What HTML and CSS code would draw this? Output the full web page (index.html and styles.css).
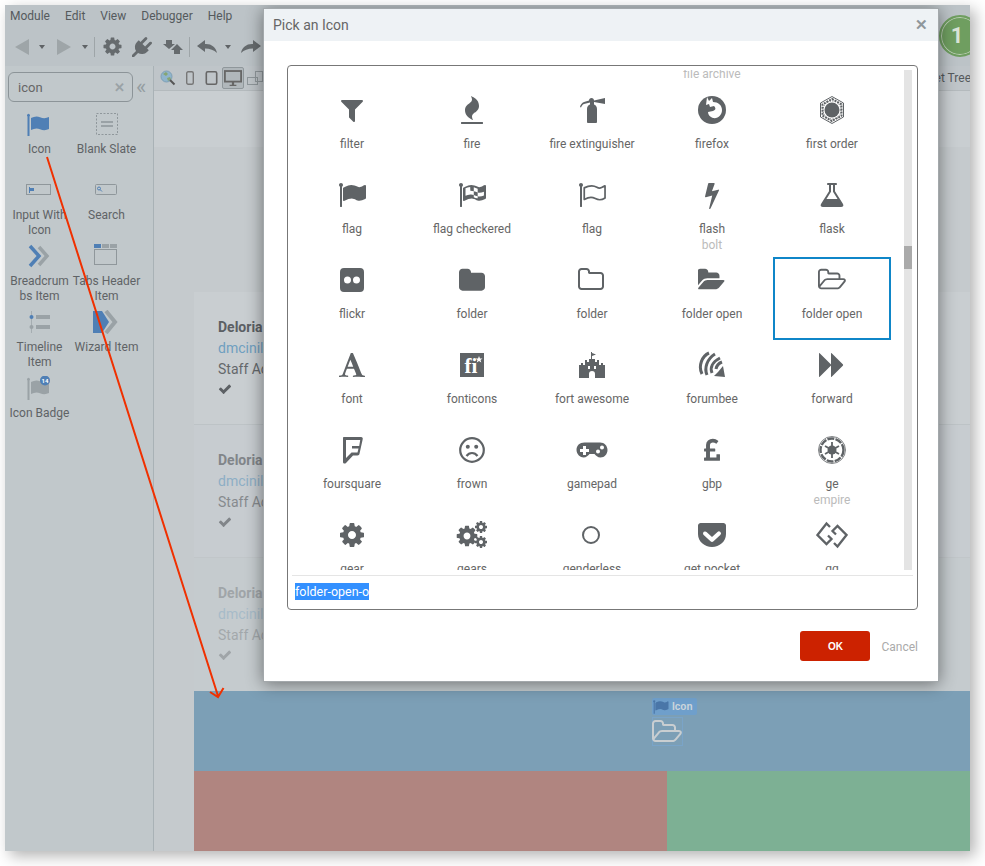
FILE: index.html
```html
<!DOCTYPE html>
<html lang="en">
<head>
  <meta charset="UTF-8">
  <title>Pick an Icon</title>
  <link rel="stylesheet" href="styles.css">
</head>
<body>
  <!-- icon sprite -->
  <svg class="sprite" xmlns="http://www.w3.org/2000/svg">
    <symbol id="i-filter" viewBox="0 0 1792 1792"><path d="M1595 295q17 41-14 70l-493 493v742q0 42-39 59-13 5-25 5-27 0-45-19l-256-256q-19-19-19-45v-486l-493-493q-31-29-14-70 17-39 59-39h1280q42 0 59 39z"/></symbol>
    <symbol id="i-fire" viewBox="0 0 1792 1792"><path d="M1600 1696v64q0 13-9.5 22.5t-22.5 9.5h-1344q-13 0-22.5-9.5t-9.5-22.5v-64q0-13 9.5-22.5t22.5-9.5h1344q13 0 22.5 9.5t9.5 22.5zm-256-1056q0 78-24.5 144t-64 112.5-87.5 88-96 77.5-87.5 72-64 81.5-24.5 96.5q0 96 67 224l-4-1 1 1q-90-41-160-83t-138.5-100-113.5-122.5-72.5-150.5-27.5-184q0-78 24.5-144t64-112.5 87.5-88 96-77.5 87.5-72 64-81.5 24.5-96.5q0-94-66-224l3 1-1-1q90 41 160 83t138.5 100 113.5 122.5 72.5 150.5 27.5 184z"/></symbol>
    <symbol id="i-extinguisher" viewBox="0 0 28 28"><path d="M9 26V13c0-2.500 1.500-4 3-4.500V6.500L6 8c-1.500.5-2.500 2-3 3.500L2 11c.5-2.500 2-4 4-5l5-1.500C11 3 12 2 13.500 2S16 3 16 4.500L27 2v6l-11-2v2.500c1.500.5 3 2 3 4.500v13c0 .5-.5 1-1 1h-8c-.5 0-1-.5-1-1z"/></symbol>
    <symbol id="i-firefox" viewBox="0 0 28 28"><circle cx="14" cy="14" r="14"/><path fill="#fff" d="M9 1l2 4 3-3 1 4c5 0 9 3 9 8 0 5-4 9-9 8-3-1-5-3-5-6l5-1c3-1 3-3 1-5l-4 1-1-3-3 1z"/></symbol>
    <symbol id="i-first-order" viewBox="0 0 28 28"><polygon points="14,.5 25.500,7 25.500,21 14,27.500 2.500,21 2.500,7" fill="none" stroke="currentColor"/><polygon points="14,3 23.500,8.300 23.500,19.700 14,25 4.500,19.700 4.500,8.300" fill="none" stroke="currentColor" stroke-width="2" stroke-dasharray="2 1"/><circle cx="14" cy="14" r="7.500"/><circle cx="14" cy="14" r="9" fill="none" stroke="currentColor" stroke-dasharray="1 1.500"/></symbol>
    <symbol id="i-flag" viewBox="0 0 1792 1792"><path d="M320 256q0 72-64 110v1266q0 13-9.500 22.500t-22.500 9.500h-64q-13 0-22.500-9.500t-9.500-22.500v-1266q-64-38-64-110 0-53 37.500-90.500t90.500-37.500 90.500 37.500 37.500 90.500zm1472 64v763q0 25-12.500 38.500t-39.500 27.500q-215 116-369 116-61 0-123.500-22t-108.500-48-115.500-48-142.500-22q-192 0-464 146-17 9-33 9-26 0-45-19t-19-45v-742q0-32 31-55 21-14 79-43 236-120 421-120 107 0 200 29t219 88q38 19 88 19 54 0 117.500-21t110-47 88-47 54.500-21q26 0 45 19t19 45z"/></symbol>
    <symbol id="i-flag-checkered" viewBox="0 0 1792 1792"><path d="M320 256q0 72-64 110v1266q0 13-9.500 22.500t-22.500 9.500h-64q-13 0-22.500-9.500t-9.500-22.500v-1266q-64-38-64-110 0-53 37.500-90.500t90.500-37.500 90.500 37.500 37.500 90.500zm1472 64v763q0 25-12.500 38.500t-39.500 27.500q-215 116-369 116-61 0-123.500-22t-108.500-48-115.500-48-142.500-22q-192 0-464 146-17 9-33 9-26 0-45-19t-19-45v-742q0-32 31-55 21-14 79-43 236-120 421-120 107 0 200 29t219 88q38 19 88 19 54 0 117.500-21t110-47 88-47 54.500-21q26 0 45 19t19 45z"/><path fill="#fff" d="M480 470q120-70 300-90l10 250q-160 10-310 90zM1010 400q130 40 250 100v240q-120-60-250-90zM790 630q120 0 220 20v240q-100-40-220-30zM1260 740q180 40 400-60v240q-200 100-400 60zM480 720q120-60 310-90v230q-170 20-310 90zM1010 890q120 40 250 90v130q-130 10-250-70z"/></symbol>
    <symbol id="i-flag-o" viewBox="0 0 1792 1792"><path d="M320 256q0 72-64 110v1266q0 13-9.500 22.500t-22.500 9.500h-64q-13 0-22.500-9.500t-9.500-22.500v-1266q-64-38-64-110 0-53 37.500-90.500t90.500-37.500 90.500 37.500 37.500 90.500z"/><path fill="none" stroke="currentColor" stroke-width="110" stroke-linejoin="round" d="M400 440q240-130 480-130 170 0 330 90 150 90 300 20 120-50 220-110v780q-170 110-340 110-130 0-280-80-150-70-280-70-180 0-430 130z"/></symbol>
    <symbol id="i-bolt" viewBox="0 0 1792 1792"><path d="M1333 566q18 20 7 44l-540 1157q-13 25-42 25-4 0-14-2-17-5-25.500-19t-4.500-30l197-808-406 101q-4 1-12 1-18 0-31-11-18-15-13-39l201-825q4-14 16-23t28-9h328q19 0 32 12.500t13 29.500q0 8-5 18l-171 463 396-98q8-2 12-2 19 0 34 15z"/></symbol>
    <symbol id="i-flask" viewBox="0 0 1792 1792"><path d="M1591 1448q56 89 21.500 152.500t-140.500 63.500h-1152q-106 0-140.500-63.500t21.500-152.500l503-793v-399h-64q-26 0-45-19t-19-45 19-45 45-19h512q26 0 45 19t19 45-19 45-45 19h-64v399zm-779-725l-272 429h712l-272-429-20-31v-436h-128v436z"/></symbol>
    <symbol id="i-flickr" viewBox="0 0 28 28"><path fill-rule="evenodd" d="M6 2h16a4 4 0 0 1 4 4v16a4 4 0 0 1-4 4H6a4 4 0 0 1-4-4V6a4 4 0 0 1 4-4zM9.500 10.500a3.500 3.500 0 1 0 0 7a3.500 3.500 0 0 0 0-7zM18.500 10.500a3.500 3.500 0 1 0 0 7a3.500 3.500 0 0 0 0-7z"/></symbol>
    <symbol id="i-folder" viewBox="0 0 1792 1792"><path d="M1600 648v704q0 92-66 158t-158 66h-1216q-92 0-158-66t-66-158v-960q0-92 66-158t158-66h320q92 0 158 66t66 158v32h672q92 0 158 66t66 158z" transform="translate(128 0)"/></symbol>
    <symbol id="i-folder-o" viewBox="0 0 1792 1792"><path d="M1536 1312v-704q0-40-28-68t-68-28h-704q-40 0-68-28t-28-68v-64q0-40-28-68t-68-28h-320q-40 0-68 28t-28 68v960q0 40 28 68t68 28h1216q40 0 68-28t28-68zm128-704v704q0 92-66 158t-158 66h-1216q-92 0-158-66t-66-158v-960q0-92 66-158t158-66h320q92 0 158 66t66 158v32h672q92 0 158 66t66 158z"/></symbol>
    <symbol id="i-folder-open" viewBox="0 0 1920 1792"><path d="M1815 952q0 31-31 66l-336 396q-43 51-120.500 86.500t-143.500 35.500h-1088q-34 0-60.500-13t-26.500-43q0-31 31-66l336-396q43-51 120.500-86.500t143.500-35.500h1088q34 0 60.500 13t26.500 43zm-343-344v160h-832q-94 0-197 47.500t-164 119.500l-337 396-5 6q0-4-.5-12.500t-.5-12.500v-960q0-92 66-158t158-66h320q92 0 158 66t66 158v32h544q92 0 158 66t66 158z"/></symbol>
    <symbol id="i-folder-open-o" viewBox="0 0 1920 1792"><path d="M1781 931q0-35-53-35h-1088q-40 0-85.500 21.500t-71.500 52.500l-294 363q-18 24-18 40 0 35 53 35h1088q40 0 86-22t71-53l294-363q18-22 18-39zm-1141-163h768v-160q0-40-28-68t-68-28h-576q-40 0-68-28t-28-68v-64q0-40-28-68t-68-28h-320q-40 0-68 28t-28 68v853l256-315q44-53 116-87.500t140-34.500zm1269 163q0 62-46 120l-295 363q-43 53-116 87.500t-140 34.500h-1088q-92 0-158-66t-66-158v-960q0-92 66-158t158-66h320q92 0 158 66t66 158v32h544q92 0 158 66t66 158v160h192q54 0 99 24.500t67 70.500q15 32 15 68z"/></symbol>
    <symbol id="i-font" viewBox="0 0 1792 1792"><path d="M789 559l-170 450q33 0 136.500 2t160.500 2q19 0 57-2-87-253-184-452zm-725 1105l2-79q23-7 56-12.500t57-10.500 49.500-14.500 44.500-29 31-50.500l237-616 280-724h128q8 14 11 21l205 480q33 78 106 257.500t114 274.500q15 34 58 144.500t72 168.500q20 45 35 57 19 15 88 29.500t84 20.500q6 38 6 57 0 4-.5 13t-.5 13q-63 0-190-8t-191-8q-76 0-215 7t-178 8q0-43 4-78l131-28q1 0 12.500-2.500t15.500-3.500 14.500-4.500 15-6.500 11-8 9-11 2.500-14q0-16-31-96.500t-72-177.500-42-100l-450-2q-26 58-76.500 195.500t-50.500 162.500q0 22 14 37.500t43.500 24.500 48.500 13.500 57 8.500 41 4q1 19 1 58 0 9-2 27-58 0-174.500-10t-174.500-10q-8 0-26.500 4t-21.500 4q-80 14-188 14z"/></symbol>
    <symbol id="i-fort" viewBox="0 0 28 28"><path fill-rule="evenodd" d="M13 1h1v1l4 1.500L14 5v3h3v3h2V9h2v5h2v-2h2v2h2v13H17v-4a3 3 0 0 0-6 0v4H1V14h2v-2h2v2h2V9h2v2h2V8h2zM10 15v3h2v-3zM16 15v3h2v-3z"/></symbol>
    <symbol id="i-forumbee" viewBox="0 0 28 28"><g fill="none" stroke="currentColor" stroke-width="3"><path d="M4 23C0 15 4 5 11 2"/><path d="M9 24C6 17 9 8 17 3"/><path d="M14 22C12 17 14 11 22 7"/><path d="M18 18c.5-3 2-5.500 6-7"/></g><polygon points="25,15 27,26 16,25 20,21"/></symbol>
    <symbol id="i-forward" viewBox="0 0 1792 1792"><path d="M109 1651q-19 19-32 13t-13-32v-1472q0-26 13-32t32 13l710 710q9 9 13 19v-710q0-26 13-32t32 13l710 710q19 19 19 45t-19 45l-710 710q-19 19-32 13t-13-32v-710q-4 10-13 19z"/></symbol>
    <symbol id="i-foursquare" viewBox="0 0 28 28"><path fill-rule="evenodd" d="M6 1h17c1.500 0 2 1 1.700 2.200l-3.200 14.600c-.2 1-.9 1.700-2 1.700h-4.500L8 27c-1 1-3 .6-3-1V2c0-.6.400-1 1-1zM8 4v18l5.500-5.500h6l1-4H14v-2.500h7.200l1-6z"/></symbol>
    <symbol id="i-frown" viewBox="0 0 28 28"><circle cx="14" cy="14" r="11.800" fill="none" stroke="currentColor" stroke-width="2.200"/><circle cx="9.800" cy="10.800" r="2"/><circle cx="18.200" cy="10.800" r="2"/><path d="M8.500 20c2.800-4 8.200-4 11 0" fill="none" stroke="currentColor" stroke-width="2.200"/></symbol>
    <symbol id="i-gamepad" viewBox="0 0 32 28"><path fill-rule="evenodd" d="M8 6.500h16c4.500 0 7.500 3.500 7.500 7.500s-3 7.500-7 7.500c-3 0-4.500-2-6-3.500h-5c-1.500 1.500-3 3.500-6 3.500s-7-3-7-7.500 3-7.500 8-7.500zM7 10v3H4v3h3v3h3v-3h3v-3h-3v-3zM22 13.500a2 2 0 1 0 0 4a2 2 0 0 0 0-4zM26 9.500a2 2 0 1 0 0 4a2 2 0 0 0 0-4z"/></symbol>
    <symbol id="i-gbp" viewBox="0 0 1024 1792"><path d="M1022 1192v367q0 14-9 23t-23 9h-956q-14 0-23-9t-9-23v-150q0-13 9.500-22.500t22.500-9.500h97v-383h-95q-14 0-23-9.500t-9-22.500v-131q0-14 9-23t23-9h95v-223q0-171 123.500-282t314.500-111q185 0 335 125 9 8 10 20.500t-7 22.500l-103 127q-9 11-22 12-13 2-23-7-5-5-26-19t-69-32-93-18q-85 0-137 47t-52 123v215h305q13 0 22.500 9t9.500 23v131q0 13-9.500 22.500t-22.500 9.500h-305v379h414v-181q0-13 9-22.500t23-9.500h162q14 0 23 9.500t9 22.500z"/></symbol>
    <symbol id="i-ge" viewBox="0 0 28 28"><circle cx="14" cy="14" r="13.500" fill="none" stroke="currentColor" stroke-width=".8"/><circle cx="14" cy="14" r="11.500" fill="none" stroke="currentColor" stroke-width="2.400" stroke-dasharray="7 1.200"/><circle cx="14" cy="14" r="4.500"/><g stroke="currentColor" stroke-width="1.800"><path d="M14 6v16M7 10l14 8M21 10L7 18"/></g></symbol>
    <symbol id="i-cog" viewBox="0 0 1792 1792"><path d="M1152 896q0-106-75-181t-181-75-181 75-75 181 75 181 181 75 181-75 75-181zm512-109v222q0 12-8 23t-20 13l-185 28q-19 54-39 91 35 50 107 138 10 12 10 25t-9 23q-27 37-99 108t-94 71q-12 0-26-9l-138-108q-44 23-91 38-16 136-29 186-7 28-36 28h-222q-14 0-24.500-8.500t-11.500-21.500l-28-184q-49-16-90-37l-141 107q-10 9-25 9-14 0-25-11-126-114-165-168-7-10-7-23 0-12 8-23 15-21 51-66.500t54-70.500q-27-50-41-99l-183-27q-13-2-21-12.500t-8-23.500v-222q0-12 8-23t19-13l186-28q14-46 39-92-40-57-107-138-10-12-10-24 0-10 9-23 26-36 98.500-107.500t94.500-71.500q13 0 26 10l138 107q44-23 91-38 16-136 29-186 7-28 36-28h222q14 0 24.500 8.500t11.500 21.500l28 184q49 16 90 37l142-107q9-9 24-9 13 0 25 10 129 119 165 170 7 8 7 22 0 12-8 23-15 21-51 66.500t-54 70.500q26 50 41 98l183 28q13 2 21 12.500t8 23.500z"/></symbol>
    <symbol id="i-gears" viewBox="-4 0 32 28"><use href="#i-cog" x="-5" y="3" width="24" height="24"/><use href="#i-cog" x="14" y="-1" width="14" height="14"/><use href="#i-cog" x="14" y="14" width="14" height="14"/></symbol>
    <symbol id="i-pocket" viewBox="0 0 28 28"><path fill-rule="evenodd" d="M2.500 2h23C26.500 2 28 3 28 4.500V13c0 7.500-6.500 13-14 13S0 20.500 0 13V4.500C0 3 1.500 2 2.500 2zM7 10.500a2 2 0 0 0-1.300 3.500l6.800 6.300a2.200 2.200 0 0 0 3 0l6.800-6.300A2 2 0 0 0 19.500 11L14 16l-5.500-5a2 2 0 0 0-1.500-.5z"/></symbol>
    <symbol id="i-gg" viewBox="0 0 32 28"><g fill="none" stroke="currentColor" stroke-width="2.300"><path d="M14 6l-3.500-3.500L1.500 14l9 9 5-5-3.500-3.500"/><path d="M18 22l3.500 3.500 9-11.500-9-9-5 5 3.500 3.500"/></g></symbol>
    <symbol id="i-check" viewBox="0 0 1792 1792"><path d="M1671 566q0 40-28 68l-724 724-136 136q-28 28-68 28t-68-28l-136-136-362-362q-28-28-28-68t28-68l136-136q28-28 68-28t68 28l294 295 656-657q28-28 68-28t68 28l136 136q28 28 28 68z"/></symbol>
    <symbol id="i-plug" viewBox="0 0 1792 1792"><path d="M1755 453q37 38 37 90.500t-37 90.500l-401 400 150 150-160 160q-163 163-389.500 186.500t-411.500-100.500l-362 362h-181v-181l362-362q-124-185-100.500-411.500t186.500-389.500l160-160 150 150 400-401q38-37 91-37t90 37 37 90.500-37 90.500l-400 401 234 234 401-400q38-37 91-37t90 37z"/></symbol>
    <symbol id="i-undo" viewBox="0 0 20 13"><path d="M0 6L8 0v4c6-.5 11 3 12 9-3-3-7-4.500-12-4.500V12z"/></symbol>
  </svg>

  <div class="app">
    <div class="menu-bar">
      <span>Module</span><span>Edit</span><span>View</span><span>Debugger</span><span>Help</span>
    </div>

    <div class="toolbar">
      <span class="tri tri-left"></span><span class="caret caret-a"></span>
      <span class="tri tri-right"></span><span class="caret caret-b"></span>
      <span class="tool-sep"></span>
      <svg class="tool-icon tool-cog"><use href="#i-cog"/></svg>
      <svg class="tool-icon tool-plug"><use href="#i-plug"/></svg>
      <svg class="tool-publish" viewBox="0 0 20 16"><polygon points="0,5 3,5 3,1 9,1 9,5 12,5 6,10"/><polygon points="8,11 14,5 20,11 17,11 17,15 11,15 11,11"/></svg>
      <span class="tool-sep tool-sep-2"></span>
      <svg class="tool-undo"><use href="#i-undo"/></svg><span class="caret caret-c"></span>
      <svg class="tool-undo tool-redo"><use href="#i-undo"/></svg>
    </div>

    <div class="main">
      <aside class="sidebar">
        <div class="search-row">
          <div class="search-box"><span>icon</span><span class="search-x">✕</span></div>
          <span class="collapse">«</span>
        </div>
        <div class="widgets">
          <div class="widget">
            <svg class="widget-icon" viewBox="0 0 28 24"><path class="blue" d="M4 3.500a1.500 1.500 0 1 0-2.500 1V24h2V4.500A1.500 1.500 0 0 0 4 3.500zM5 6c3-1.500 6-2 9-.8 3 1.300 6 1.300 9-.2v12c-3 1.500-6 1.500-9 .2-3-1.200-6-.7-9 .8z"/></svg>
            <span>Icon</span>
          </div>
          <div class="widget">
            <svg class="widget-icon" viewBox="0 0 28 24"><rect x="3.500" y="1.500" width="21" height="21" fill="none" stroke="#8f979b" stroke-dasharray="2 1.500"/><rect x="8" y="9" width="12" height="2" fill="#9aa2a6"/><rect x="8" y="13" width="12" height="2" fill="#9aa2a6"/></svg>
            <span>Blank Slate</span>
          </div>
          <div class="widget">
            <svg class="widget-icon" viewBox="0 0 28 24"><rect x=".5" y="6.500" width="24" height="10" fill="none" stroke="#8f979b"/><path class="blue" d="M3 9h1v1h4v3H4v2H3z"/></svg>
            <span>Input With<br>Icon</span>
          </div>
          <div class="widget">
            <svg class="widget-icon" viewBox="0 0 28 24"><rect x="2.500" y="6.500" width="21" height="10" rx="1" fill="none" stroke="#8f979b"/><circle cx="6" cy="10.500" r="1.500" fill="none" stroke="#4f7fb5"/><path d="M7 11.500l2 2" stroke="#4f7fb5"/></svg>
            <span>Search</span>
          </div>
          <div class="widget">
            <svg class="widget-icon" viewBox="0 0 28 24"><polyline points="4,2 13,12 4,22" fill="none" stroke="#4f7fb5" stroke-width="3.500"/><polyline points="13,3 21,12 13,21" fill="none" stroke="#9aa2a6" stroke-width="3.500"/></svg>
            <span>Breadcrum<br>bs Item</span>
          </div>
          <div class="widget">
            <svg class="widget-icon" viewBox="0 0 28 24"><rect x="1" y="0" width="7" height="4" class="blue"/><rect x="9" y="0" width="7" height="4" fill="#9aa2a6"/><rect x="17" y="0" width="7" height="4" fill="#9aa2a6"/><rect x="1.500" y="5.500" width="22" height="15" fill="none" stroke="#8f979b"/></svg>
            <span>Tabs Header<br>Item</span>
          </div>
          <div class="widget">
            <svg class="widget-icon" viewBox="0 0 28 24"><rect x="5" y="1" width="1" height="22" fill="#a5adb1"/><circle cx="5.500" cy="7" r="2" fill="#4f7fb5"/><circle cx="5.500" cy="17" r="2" fill="#9aa2a6"/><rect x="10" y="5" width="14" height="4" fill="#9aa2a6"/><rect x="10" y="15" width="14" height="4" fill="#9aa2a6"/></svg>
            <span>Timeline<br>Item</span>
          </div>
          <div class="widget">
            <svg class="widget-icon" viewBox="0 0 28 24"><polygon points="0,1 9,1 16,12 9,23 0,23" fill="#4f7fb5"/><polyline points="13,1 22,12 13,23" fill="none" stroke="#9aa2a6" stroke-width="4"/></svg>
            <span>Wizard Item</span>
          </div>
          <div class="widget">
            <svg class="widget-icon" viewBox="0 0 28 24"><path fill="#9aa2a6" d="M4 3.500a1.500 1.500 0 1 0-2.500 1V24h2V4.500A1.500 1.500 0 0 0 4 3.500zM5 6c3-1.500 6-2 9-.8 3 1.300 6 1.300 9-.2v12c-3 1.500-6 1.500-9 .2-3-1.200-6-.7-9 .8z"/><circle cx="19" cy="4.500" r="5" fill="#4f7fb5"/><text x="19" y="6.500" class="badge-num">14</text></svg>
            <span>Icon Badge</span>
          </div>
        </div>
      </aside>

      <section class="canvas">
        <div class="canvas-tools">
          <svg class="device device-globe" viewBox="0 0 16 16"><circle cx="6.500" cy="6.500" r="5.500" fill="#8fb4cc" stroke="#7fa0b5"/><path d="M3 4l3-2 2 2-2 2zM7 8l3-1 1 2-3 2z" fill="#86a572"/><path d="M10 10l4.500 4.500" stroke="#555" stroke-width="2"/></svg>
          <svg class="device device-phone" viewBox="0 0 8 14"><rect x=".7" y=".7" width="6.600" height="12.600" rx="1.500" fill="none" stroke="#777" stroke-width="1.400"/></svg>
          <svg class="device device-tablet" viewBox="0 0 12 14"><rect x=".8" y=".8" width="10.400" height="12.400" rx="1.500" fill="none" stroke="#666" stroke-width="1.600"/></svg>
          <span class="device-active">
            <svg class="device-screen" viewBox="0 0 16 14"><rect x=".8" y=".8" width="14.400" height="9.400" fill="none" stroke="#666" stroke-width="1.600"/><path d="M5 13h6v1H5zM7 10h2v3H7z" fill="#666"/></svg>
          </span>
          <svg class="device device-rotate" viewBox="0 0 16 14"><rect x=".5" y="6.500" width="10" height="7" fill="none" stroke="#8f979b"/><rect x="8.500" y=".5" width="7" height="10" fill="none" stroke="#8f979b"/></svg>
          <span class="tree-tab">Widget Tree</span>
        </div>
        <div class="canvas-strip"></div>

        <div class="cards">
          <div class="card card-1">
            <strong>Deloria</strong>
            <a>dmcinil</a>
            <span>Staff Ac</span>
            <svg class="card-check"><use href="#i-check"/></svg>
          </div>
          <div class="card card-2">
            <strong>Deloria</strong>
            <a>dmcinil</a>
            <span>Staff Ac</span>
            <svg class="card-check"><use href="#i-check"/></svg>
          </div>
          <div class="card card-3">
            <strong>Deloria</strong>
            <a>dmcinil</a>
            <span>Staff Ac</span>
            <svg class="card-check"><use href="#i-check"/></svg>
          </div>
        </div>

        <div class="drop-blue">
          <div class="icon-tag"><svg class="tag-flag"><use href="#i-flag"/></svg>Icon</div>
          <div class="drop-icon"><svg><use href="#i-folder-open-o"/></svg></div>
        </div>
        <div class="drop-row">
          <div class="drop-red"></div>
          <div class="drop-green"></div>
        </div>
      </section>
    </div>

    <div class="version-badge"><span>1</span></div>

    <!-- drag arrow -->
    <svg class="drag-arrow" viewBox="0 0 965 846">
      <path d="M42 152L213 691M205 687L213 692L218.500 683"/>
    </svg>

    <div class="modal">
      <div class="modal-title">
        <span>Pick an Icon</span>
        <span class="modal-close">✕</span>
      </div>
      <div class="modal-body">
        <div class="picker">
          <div class="picker-scroll">
            <div class="icon-grid">
              <div class="cell"></div><div class="cell"></div><div class="cell"></div>
              <div class="cell"><div class="icon-slot"></div><span class="cell-sub">file archive</span></div>
              <div class="cell"></div>

              <div class="cell"><svg><use href="#i-filter"/></svg><span class="cell-label">filter</span></div>
              <div class="cell"><svg><use href="#i-fire"/></svg><span class="cell-label">fire</span></div>
              <div class="cell"><svg><use href="#i-extinguisher"/></svg><span class="cell-label">fire extinguisher</span></div>
              <div class="cell"><svg><use href="#i-firefox"/></svg><span class="cell-label">firefox</span></div>
              <div class="cell"><svg><use href="#i-first-order"/></svg><span class="cell-label">first order</span></div>

              <div class="cell"><svg><use href="#i-flag"/></svg><span class="cell-label">flag</span></div>
              <div class="cell"><svg><use href="#i-flag-checkered"/></svg><span class="cell-label">flag checkered</span></div>
              <div class="cell"><svg><use href="#i-flag-o"/></svg><span class="cell-label">flag</span></div>
              <div class="cell"><svg><use href="#i-bolt"/></svg><span class="cell-label">flash</span><span class="cell-sub">bolt</span></div>
              <div class="cell"><svg><use href="#i-flask"/></svg><span class="cell-label">flask</span></div>

              <div class="cell"><svg><use href="#i-flickr"/></svg><span class="cell-label">flickr</span></div>
              <div class="cell"><svg><use href="#i-folder"/></svg><span class="cell-label">folder</span></div>
              <div class="cell"><svg><use href="#i-folder-o"/></svg><span class="cell-label">folder</span></div>
              <div class="cell"><svg><use href="#i-folder-open"/></svg><span class="cell-label">folder open</span></div>
              <div class="cell selected"><svg><use href="#i-folder-open-o"/></svg><span class="cell-label">folder open</span></div>

              <div class="cell"><svg><use href="#i-font"/></svg><span class="cell-label">font</span></div>
              <div class="cell"><svg class="fonticons" viewBox="0 0 28 28"><rect x="2" y="2" width="24" height="24"/><text x="13" y="22" class="fi-text">fi</text><polygon points="21,5 22,7.500 24.500,7.500 22.500,9 23.300,11.500 21,10 18.700,11.500 19.500,9 17.500,7.500 20,7.500" fill="#fff"/></svg><span class="cell-label">fonticons</span></div>
              <div class="cell"><svg><use href="#i-fort"/></svg><span class="cell-label">fort awesome</span></div>
              <div class="cell"><svg><use href="#i-forumbee"/></svg><span class="cell-label">forumbee</span></div>
              <div class="cell"><svg><use href="#i-forward"/></svg><span class="cell-label">forward</span></div>

              <div class="cell"><svg><use href="#i-foursquare"/></svg><span class="cell-label">foursquare</span></div>
              <div class="cell"><svg><use href="#i-frown"/></svg><span class="cell-label">frown</span></div>
              <div class="cell"><svg class="wide"><use href="#i-gamepad"/></svg><span class="cell-label">gamepad</span></div>
              <div class="cell"><svg><use href="#i-gbp"/></svg><span class="cell-label">gbp</span></div>
              <div class="cell"><svg><use href="#i-ge"/></svg><span class="cell-label">ge</span><span class="cell-sub">empire</span></div>

              <div class="cell"><svg><use href="#i-cog"/></svg><span class="cell-label">gear</span></div>
              <div class="cell"><svg class="wide"><use href="#i-gears"/></svg><span class="cell-label">gears</span></div>
              <div class="cell"><svg viewBox="0 0 28 28"><circle cx="13" cy="14" r="8" fill="none" stroke="currentColor" stroke-width="2"/></svg><span class="cell-label">genderless</span></div>
              <div class="cell"><svg><use href="#i-pocket"/></svg><span class="cell-label">get pocket</span></div>
              <div class="cell"><svg class="wide"><use href="#i-gg"/></svg><span class="cell-label">gg</span></div>
            </div>
            <div class="scrollbar"><div class="scroll-thumb"></div></div>
          </div>
          <div class="picker-input"><span>folder-open-o</span></div>
        </div>
      </div>
      <div class="modal-footer">
        <button type="button" class="btn-ok">OK</button>
        <span class="btn-cancel">Cancel</span>
      </div>
    </div>
  </div>
</body>
</html>
```

FILE: styles.css
```css
body {
  margin: 0;
  background: #fff;
  font-family: Roboto, "Open Sans", Arial, sans-serif;
  font-size: 12px;
  color: #5f6366;
}
.sprite {
  display: none;
}
.app {
  position: relative;
  width: 965px;
  height: 846px;
  margin: 5px 15px 15px 5px;
  background: #bcc3c7;
  box-shadow: 5px 5px 14px rgba(0,0,0,.3);
  overflow: hidden;
}

/* top bars */
.menu-bar {
  display: flex;
  height: 22px;
  padding-left: 5px;
  line-height: 22px;
  color: #555a5d;
}
.menu-bar span {
  margin-right: 15px;
}
.toolbar {
  display: flex;
  align-items: center;
  height: 39px;
  padding-left: 10px;
  color: #666b6e;
}
.tri {
  width: 0;
  height: 0;
  border-top: 8px solid transparent;
  border-bottom: 8px solid transparent;
}
.tri-left {
  border-right: 14px solid #9ea5a8;
}
.tri-right {
  border-left: 14px solid #9ea5a8;
}
.caret {
  width: 0;
  height: 0;
  border-left: 3px solid transparent;
  border-right: 3px solid transparent;
  border-top: 4px solid #5f6366;
}
.caret-a {
  margin: 0 12px 0 10px;
}
.caret-b {
  margin: 0 6px 0 11px;
}
.caret-c {
  margin: 0 10px 0 8px;
}
.tool-sep {
  width: 1px;
  height: 20px;
  margin-right: 7px;
  background: #9ea5a8;
}
.tool-sep-2 {
  margin: 0 7px 0 6px;
}
.tool-icon {
  width: 20px;
  height: 20px;
  fill: #666b6e;
}
.tool-cog {
  width: 21px;
  height: 21px;
}
.tool-plug {
  margin-left: 9px;
}
.tool-publish {
  width: 20px;
  height: 16px;
  margin-left: 11px;
  fill: #666b6e;
}
.tool-undo {
  width: 20px;
  height: 13px;
  fill: #666b6e;
}
.tool-redo {
  transform: scaleX(-1);
}
.version-badge {
  position: absolute;
  top: 10px;
  left: 934px;
  box-sizing: border-box;
  width: 42px;
  height: 42px;
  padding-right: 6px;
  border: 2px solid #6f9e60;
  border-radius: 50%;
  background: #6f9e60;
  box-shadow: inset 0 0 0 1px #bcd0b6;
  color: #d9e3d6;
  font-size: 22px;
  font-weight: 700;
  line-height: 38px;
  text-align: center;
}

/* main area */
.main {
  display: flex;
  height: 785px;
}
.sidebar {
  box-sizing: border-box;
  width: 149px;
  border-right: 1px solid #a9b2b6;
  background: #c1c8cb;
}
.search-row {
  display: flex;
  align-items: center;
  padding: 6px 0 0 3px;
}
.search-box {
  display: flex;
  align-items: center;
  justify-content: space-between;
  box-sizing: border-box;
  width: 125px;
  height: 30px;
  padding: 0 7px 0 9px;
  border: 1px solid #8c9498;
  border-radius: 6px;
  color: #666;
  font-size: 13px;
}
.search-x {
  color: #9aa2a6;
  font-size: 13px;
  font-weight: 700;
}
.collapse {
  margin-left: 3px;
  color: #949da1;
  font-size: 22px;
  line-height: 26px;
}
.widgets {
  display: grid;
  grid-template-columns: 67px 67px;
  grid-auto-rows: 66px;
  padding: 10px 0 0 1px;
}
.widget {
  display: flex;
  flex-direction: column;
  align-items: center;
  line-height: 15px;
  text-align: center;
  white-space: nowrap;
}
.widget-icon {
  flex: none;
  width: 28px;
  height: 24px;
  margin-bottom: 6px;
}
.blue {
  fill: #4f7fb5;
}
.badge-num {
  fill: #fff;
  font-size: 6px;
  font-weight: 700;
  text-anchor: middle;
}

/* canvas */
.canvas {
  flex: 1;
  min-width: 0;
  background: #c5cacd;
}
.canvas-tools {
  display: flex;
  align-items: center;
  height: 24px;
  background: #bfc5c9;
}
.device {
  flex: none;
}
.device-globe {
  width: 16px;
  height: 16px;
  margin-left: 6px;
}
.device-phone {
  width: 8px;
  height: 14px;
  margin-left: 10px;
}
.device-tablet {
  width: 13px;
  height: 14px;
  margin-left: 11px;
}
.device-active {
  display: flex;
  align-items: center;
  justify-content: center;
  box-sizing: border-box;
  width: 22px;
  height: 22px;
  margin-left: 4px;
  border: 1px solid #8f979b;
  border-radius: 2px;
  background: #b0b7bb;
}
.device-screen {
  width: 18px;
  height: 16px;
}
.device-rotate {
  width: 16px;
  height: 14px;
  margin-left: 3px;
}
.tree-tab {
  margin-left: auto;
  margin-right: -1px;
  color: #555a5d;
  white-space: nowrap;
}
.canvas-strip {
  height: 57px;
  border-top: 1px solid #b4babd;
  box-sizing: border-box;
  background: #c9ced1;
}
.cards {
  margin: 145px 0 0 40px;
}
.card {
  box-sizing: border-box;
  height: 133px;
  padding: 25px 0 0 24px;
  border-bottom: 1px solid #bdc3c6;
  background: #c9ced1;
  font-size: 14px;
  line-height: 21px;
}
.card strong, .card a, .card span {
  display: block;
}
.card strong {
  color: #5c6064;
}
.card a {
  color: #6f9fc0;
}
.card span {
  color: #64686b;
}
.card-check {
  display: block;
  width: 14px;
  height: 14px;
  margin-top: 2px;
  fill: #5c6064;
}
.card-2 {
  background: #c7ccd0;
  border-bottom-color: #c1c6c9;
}
.card-2 > * {
  opacity: .65;
}
.card-3 {
  background: #c5cbce;
  border-bottom: 0;
}
.card-3 > * {
  opacity: .35;
}
.drop-blue {
  box-sizing: border-box;
  height: 80px;
  margin-left: 40px;
  padding: 7px 0 0 458px;
  background: #7c9fb6;
}
.icon-tag {
  display: flex;
  align-items: center;
  width: 45px;
  height: 17px;
  border-radius: 2px;
  background: #6f9fcb;
  color: #ccd5db;
  font-family: "Liberation Sans", Arial, sans-serif;
  font-size: 10px;
  font-weight: 700;
}
.tag-flag {
  width: 17px;
  height: 16px;
  margin-right: 3px;
  fill: #4a76a8;
}
.drop-icon {
  box-sizing: border-box;
  width: 31px;
  height: 29px;
  margin-top: 2px;
  border: 1px solid #7aa4c8;
  fill: #c9ced1;
}
.drop-icon svg {
  display: block;
  width: 30px;
  height: 28px;
  margin-left: -1px;
}
.drop-row {
  display: flex;
  height: 80px;
  margin-left: 40px;
}
.drop-red {
  width: 473px;
  background: #b08580;
}
.drop-green {
  flex: 1;
  background: #7db094;
}

/* arrow from palette to drop zone */
.drag-arrow {
  position: absolute;
  top: 0;
  left: 0;
  width: 965px;
  height: 846px;
  fill: none;
  stroke: #f03000;
  stroke-width: 2;
  pointer-events: none;
}

/* modal */
.modal {
  position: absolute;
  top: 3px;
  left: 258px;
  box-sizing: border-box;
  width: 676px;
  height: 674px;
  border: 1px solid #a3a8ab;
  background: #fff;
  box-shadow: 0 2px 16px rgba(0,0,0,.45);
}
.modal-title {
  display: flex;
  align-items: center;
  justify-content: space-between;
  height: 32px;
  padding: 0 10px 0 9px;
  background: #eef2f5;
  color: #666;
  font-size: 14px;
}
.modal-close {
  color: #8f979b;
  font-size: 15px;
  font-weight: 700;
}
.modal-body {
  padding: 24px 20px 0 23px;
}
.picker {
  box-sizing: border-box;
  width: 631px;
  height: 545px;
  padding: 4px 4px 0;
  border: 1px solid #777;
  border-radius: 4px;
}
.picker-scroll {
  display: flex;
  justify-content: space-between;
  height: 500px;
  overflow: hidden;
}
.icon-grid {
  display: grid;
  flex: none;
  grid-template-columns: repeat(5, 120px);
  grid-auto-rows: 85px;
  margin-top: -69px;
}
.cell {
  display: flex;
  flex-direction: column;
  align-items: center;
  box-sizing: border-box;
  margin: 1px;
  padding-top: 7px;
  border: 2px solid transparent;
  color: #5f6366;
  fill: #5f6366;
  line-height: 16px;
}
.cell svg {
  flex: none;
  width: 28px;
  height: 28px;
  margin-bottom: 11px;
}
.cell svg.wide {
  width: 32px;
}
.icon-slot {
  flex: none;
  height: 55px;
}
.cell-label {
  padding-top: 1px;
  color: #666;
  white-space: nowrap;
}
.cell-sub {
  color: #bbb;
  white-space: nowrap;
}
.selected {
  border-color: #0f86c8;
}
.fonticons {
  fill: #5f6366;
}
.fi-text {
  fill: #fff;
  font-family: "Liberation Serif", serif;
  font-size: 21px;
  font-weight: 700;
  text-anchor: middle;
}
.scrollbar {
  flex: none;
  width: 8px;
  height: 500px;
  margin-right: 1px;
  padding-top: 176px;
  box-sizing: border-box;
  background: #e4e4e4;
}
.scroll-thumb {
  height: 23px;
  background: #aaa;
}
.picker-input {
  height: 28px;
  margin: 5px 0 0;
  padding: 7px 0 0 3px;
  border-top: 1px solid #e5e5e5;
  font-size: 12.500px;
  line-height: 17px;
}
.picker-input span {
  display: inline-block;
  background: #3390ff;
  color: #fff;
}
.modal-footer {
  display: flex;
  align-items: center;
  justify-content: flex-end;
  margin-top: 21px;
  padding-right: 20px;
}
.btn-ok {
  width: 70px;
  height: 30px;
  margin-right: 11px;
  border: none;
  border-radius: 3px;
  background: #cc2200;
  color: #fff;
  font-family: "Liberation Sans", Arial, sans-serif;
  font-size: 10px;
  font-weight: 700;
  cursor: pointer;
}
.btn-cancel {
  padding-top: 2px;
  color: #aaa;
}
```
